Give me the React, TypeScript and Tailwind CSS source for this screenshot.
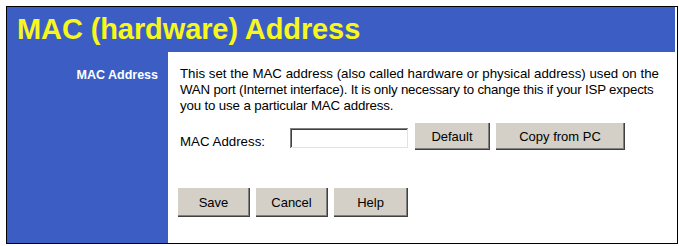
import React from 'react';

const btn =
  "h-[28px] bg-[#d4d0c8] text-[13px] text-black leading-none shadow-[inset_1px_1px_#ffffff,inset_-1px_-1px_#404040,inset_-2px_-2px_#808080] flex items-center justify-center";

const App: React.FC = () => {
  return (
    <div className="w-[679px] h-[246px] bg-white pl-[6px] pt-[6px] font-['Liberation_Sans',Arial,sans-serif]">
      <div className="w-[672px] h-[238px] border border-black flex flex-col bg-white">
        {/* Title bar */}
        <div className="h-[45px] mr-[2px] bg-[#3c5ec4] flex items-center pl-[10px]">
          <h1 className="text-[29px] font-bold text-[#f7f71c] leading-none tracking-[-0.1px]">
            MAC (hardware) Address
          </h1>
        </div>

        <div className="flex flex-1">
          {/* Sidebar */}
          <div className="w-[161px] bg-[#3c5ec4] pt-[10px] pr-[10px] text-right">
            <span className="text-[12.5px] font-bold text-white leading-[16px]">MAC Address</span>
          </div>

          {/* Content */}
          <div className="flex-1 pl-[12px] pt-[14px] text-black">
            <p className="text-[13.3px] leading-[16px]">
              This set the MAC address (also called hardware or physical address) used on the
              <br />
              <span className="tracking-[-0.2px]">
                WAN port (Internet interface). It is only necessary to change this if your ISP expects
              </span>
              <br />
              <span className="tracking-[-0.15px]">you to use a particular MAC address.</span>
            </p>

            <div className="flex items-start mt-[8px]">
              <span className="w-[110px] mt-[12px] text-[13.3px] leading-[16px]">MAC Address:</span>
              <input
                type="text"
                className="w-[118px] h-[20px] mt-[6px] bg-white outline-none shadow-[inset_1px_1px_#808080,inset_-1px_-1px_#e4e2dc,inset_2px_2px_#404040]"
              />
              <button className={`${btn} w-[76px] ml-[6px]`}>Default</button>
              <button className={`${btn} w-[130px] ml-[5px]`}>Copy from PC</button>
            </div>

            <div className="flex mt-[37px] -ml-[3px] gap-[5px]">
              <button className={`${btn} w-[73px] h-[30px]`}>Save</button>
              <button className={`${btn} w-[73px] h-[30px]`}>Cancel</button>
              <button className={`${btn} w-[75px] h-[30px]`}>Help</button>
            </div>
          </div>
        </div>
      </div>
    </div>
  );
};

export default App;
